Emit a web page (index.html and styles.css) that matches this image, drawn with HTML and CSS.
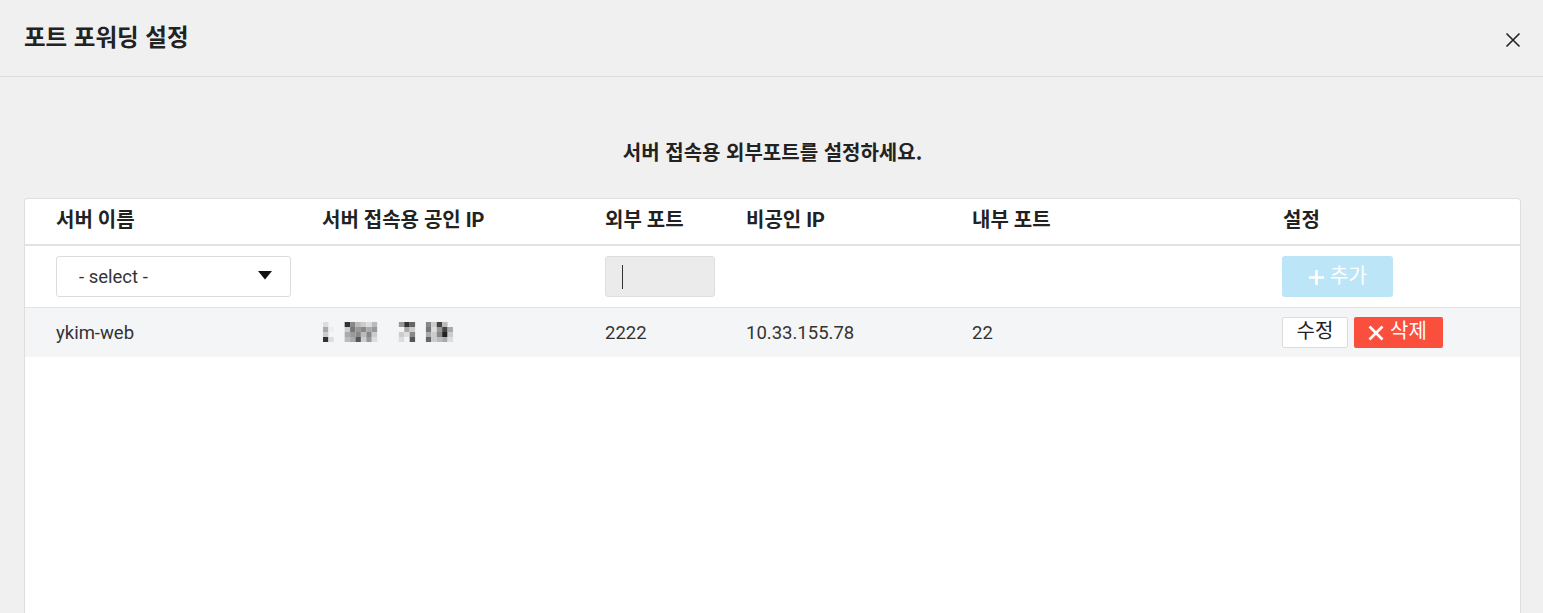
FILE: index.html
```html
<!DOCTYPE html>
<html lang="ko">
<head>
<meta charset="utf-8">
<title>포트 포워딩 설정</title>
<link rel="stylesheet" href="styles.css">
</head>
<body>
<div class="modal">
  <header class="modal-head">
    <h1 class="modal-title">포트 포워딩 설정</h1>
    <button class="close-btn" aria-label="닫기">
      <svg width="16" height="16" viewBox="0 0 16 16"><path d="M1.5 1.5 L14.5 14.5 M14.5 1.5 L1.5 14.5" stroke="#222" stroke-width="1.6" fill="none"/></svg>
    </button>
  </header>
  <main class="modal-body">
    <p class="intro">서버 접속용 외부포트를 설정하세요.</p>
    <div class="card">
      <div class="row head-row">
        <div class="cell">서버 이름</div>
        <div class="cell">서버 접속용 공인 IP</div>
        <div class="cell">외부 포트</div>
        <div class="cell">비공인 IP</div>
        <div class="cell">내부 포트</div>
        <div class="cell">설정</div>
      </div>
      <div class="row input-row">
        <div class="cell">
          <div class="select">
            <span>- select -</span>
            <svg class="select-arrow" width="14" height="9" viewBox="0 0 14 9"><path d="M0 0 H14 L7 8.5 Z" fill="#111"/></svg>
          </div>
        </div>
        <div class="cell"></div>
        <div class="cell">
          <div class="port-input"><span class="caret"></span></div>
        </div>
        <div class="cell"></div>
        <div class="cell"></div>
        <div class="cell">
          <button class="btn-add">
            <svg width="17" height="17" viewBox="0 0 17 17"><path d="M8.5 1 V16 M1 8.5 H16" stroke="#fff" stroke-width="2.6" fill="none"/></svg>
            <span>추가</span>
          </button>
        </div>
      </div>
      <div class="row data-row">
        <div class="cell">ykim-web</div>
        <div class="cell">
          <svg class="pix" width="130" height="20" viewBox="0 0 120 20" preserveAspectRatio="none" aria-label="가려진 IP">
            <rect x="0" y="0" width="5" height="5" fill="#ddd"/>
            <rect x="20" y="0" width="5" height="5" fill="#333"/>
            <rect x="25" y="0" width="5" height="5" fill="#888"/>
            <rect x="30" y="0" width="5" height="5" fill="#bbb"/>
            <rect x="35" y="0" width="5" height="5" fill="#ccc"/>
            <rect x="40" y="0" width="5" height="5" fill="#ddd"/>
            <rect x="45" y="0" width="5" height="5" fill="#bbb"/>
            <rect x="70" y="0" width="5" height="5" fill="#999"/>
            <rect x="75" y="0" width="5" height="5" fill="#333"/>
            <rect x="80" y="0" width="5" height="5" fill="#666"/>
            <rect x="95" y="0" width="5" height="5" fill="#888"/>
            <rect x="100" y="0" width="5" height="5" fill="#ccc"/>
            <rect x="105" y="0" width="5" height="5" fill="#444"/>
            <rect x="110" y="0" width="5" height="5" fill="#bbb"/>

            <rect x="0" y="5" width="5" height="5" fill="#aaa"/>
            <rect x="5" y="5" width="5" height="5" fill="#eee"/>
            <rect x="20" y="5" width="5" height="5" fill="#ccc"/>
            <rect x="25" y="5" width="5" height="5" fill="#777"/>
            <rect x="30" y="5" width="5" height="5" fill="#999"/>
            <rect x="35" y="5" width="5" height="5" fill="#888"/>
            <rect x="40" y="5" width="5" height="5" fill="#aaa"/>
            <rect x="45" y="5" width="5" height="5" fill="#999"/>
            <rect x="75" y="5" width="5" height="5" fill="#aaa"/>
            <rect x="80" y="5" width="5" height="5" fill="#ccc"/>
            <rect x="95" y="5" width="5" height="5" fill="#777"/>
            <rect x="100" y="5" width="5" height="5" fill="#ddd"/>
            <rect x="105" y="5" width="5" height="5" fill="#999"/>
            <rect x="110" y="5" width="5" height="5" fill="#444"/>
            <rect x="115" y="5" width="5" height="5" fill="#aaa"/>

            <rect x="0" y="10" width="5" height="5" fill="#ccc"/>
            <rect x="20" y="10" width="5" height="5" fill="#aaa"/>
            <rect x="25" y="10" width="5" height="5" fill="#999"/>
            <rect x="30" y="10" width="5" height="5" fill="#888"/>
            <rect x="35" y="10" width="5" height="5" fill="#bbb"/>
            <rect x="40" y="10" width="5" height="5" fill="#888"/>
            <rect x="45" y="10" width="5" height="5" fill="#ccc"/>
            <rect x="70" y="10" width="5" height="5" fill="#ccc"/>
            <rect x="75" y="10" width="5" height="5" fill="#ddd"/>
            <rect x="80" y="10" width="5" height="5" fill="#888"/>
            <rect x="95" y="10" width="5" height="5" fill="#aaa"/>
            <rect x="100" y="10" width="5" height="5" fill="#ccc"/>
            <rect x="105" y="10" width="5" height="5" fill="#888"/>
            <rect x="110" y="10" width="5" height="5" fill="#222"/>
            <rect x="115" y="10" width="5" height="5" fill="#ccc"/>

            <rect x="0" y="15" width="5" height="5" fill="#333"/>
            <rect x="5" y="15" width="5" height="5" fill="#ddd"/>
            <rect x="20" y="15" width="5" height="5" fill="#bbb"/>
            <rect x="25" y="15" width="5" height="5" fill="#aaa"/>
            <rect x="30" y="15" width="5" height="5" fill="#555"/>
            <rect x="35" y="15" width="5" height="5" fill="#ccc"/>
            <rect x="40" y="15" width="5" height="5" fill="#999"/>
            <rect x="45" y="15" width="5" height="5" fill="#ddd"/>
            <rect x="70" y="15" width="5" height="5" fill="#ddd"/>
            <rect x="80" y="15" width="5" height="5" fill="#555"/>
            <rect x="95" y="15" width="5" height="5" fill="#666"/>
            <rect x="100" y="15" width="5" height="5" fill="#ccc"/>
            <rect x="105" y="15" width="5" height="5" fill="#bbb"/>
            <rect x="110" y="15" width="5" height="5" fill="#aaa"/>
            <rect x="115" y="15" width="5" height="5" fill="#ddd"/>
          </svg>
        </div>
        <div class="cell">2222</div>
        <div class="cell">10.33.155.78</div>
        <div class="cell">22</div>
        <div class="cell actions">
          <button class="btn-edit">수정</button>
          <button class="btn-del">
            <svg width="16" height="16" viewBox="0 0 16 16"><path d="M1.5 1.5 L14.5 14.5 M14.5 1.5 L1.5 14.5" stroke="#fff" stroke-width="2.6" fill="none"/></svg>
            <span>삭제</span>
          </button>
        </div>
      </div>
    </div>
  </main>
</div>
</body>
</html>
```

FILE: styles.css
```css
* { box-sizing: border-box; }

html, body {
  margin: 0;
  padding: 0;
  height: 100%;
  overflow: hidden;
  background: #f0f0f0;
  font-family: Roboto, "Noto Sans CJK KR", sans-serif;
  color: #333;
}

.modal {
  display: flex;
  flex-direction: column;
  height: 100%;
}

.modal-head {
  height: 77px;
  display: flex;
  align-items: center;
  justify-content: space-between;
  padding: 0 22px 4px 24px;
  border-bottom: 1px solid #dcdcdc;
}

.modal-title {
  margin: 0;
  font-size: 23.5px;
  line-height: 30px;
  font-weight: 700;
  color: #222;
  font-family: "Noto Sans CJK KR", sans-serif;
}

.close-btn {
  border: 0;
  background: transparent;
  padding: 0;
  width: 16px;
  height: 16px;
  display: flex;
  margin-top: 8px;
}

.modal-body {
  flex: 1;
  padding: 0 22px 0 24px;
  display: flex;
  flex-direction: column;
}

.intro {
  margin: 62px 0 33px;
  text-align: center;
  font-size: 20px;
  line-height: 26px;
  font-weight: 700;
  color: #222;
  font-family: "Noto Sans CJK KR", sans-serif;
}

.card {
  flex: 1;
  background: #fff;
  border: 1px solid #dedede;
  border-bottom: 0;
  border-radius: 4px 4px 0 0;
}

.row {
  display: grid;
  grid-template-columns: 266px 283px 141px 226px 311px 1fr;
  align-items: center;
}

.cell {
  padding-left: 31px;
  font-size: 18.5px;
}

.head-row {
  height: 47px;
  border-bottom: 2px solid #e3e3e3;
  font-weight: 700;
  color: #222;
  padding-bottom: 4px;
}

.head-row .cell {
  font-size: 20px;
  line-height: 26px;
}

.input-row {
  height: 62px;
  border-bottom: 1px solid #e3e3e3;
}

.data-row {
  height: 49px;
  background: #f4f5f7;
  color: #333;
}

.select {
  height: 41px;
  border: 1px solid #dcdcdc;
  border-radius: 3px;
  display: flex;
  align-items: center;
  justify-content: space-between;
  padding: 0 18px 0 22px;
  color: #333;
  font-size: 18.5px;
  background: #fff;
}

.select-arrow { display: block; margin-top: -2px; }

.port-input {
  height: 41px;
  width: 110px;
  background: #ebebeb;
  border: 1px solid #dedede;
  border-radius: 3px;
  display: flex;
  align-items: center;
  padding-left: 16px;
}

.caret {
  display: block;
  width: 1px;
  height: 24px;
  background: #333;
}

button {
  font-family: Roboto, "Noto Sans CJK KR", sans-serif;
  cursor: pointer;
}

.btn-add {
  width: 111px;
  height: 41px;
  border: 0;
  border-radius: 3px;
  background: #bce6f8;
  color: #fff;
  font-size: 20px;
  display: flex;
  align-items: center;
  justify-content: center;
  gap: 5px;
  padding: 0 0 4px;
  margin-left: -1px;
}

.btn-add svg { margin-top: 5px; }

.actions {
  display: flex;
  gap: 6px;
  padding-left: 30px;
}

.btn-edit {
  width: 66px;
  height: 31px;
  border: 1px solid #dcdcdc;
  border-radius: 2px;
  background: #fff;
  color: #222;
  font-size: 20px;
  line-height: 26px;
  padding: 0 0 3px;
}

.btn-del {
  width: 89px;
  height: 31px;
  border: 0;
  border-radius: 2px;
  background: #fa4f3c;
  color: #fff;
  font-size: 20px;
  line-height: 26px;
  display: flex;
  align-items: center;
  justify-content: center;
  gap: 6px;
  padding: 0 2px 3px 0;
}

.btn-del svg { margin-top: 3px; }

.pix { display: block; margin-left: 1px; margin-top: -2px; }
```
